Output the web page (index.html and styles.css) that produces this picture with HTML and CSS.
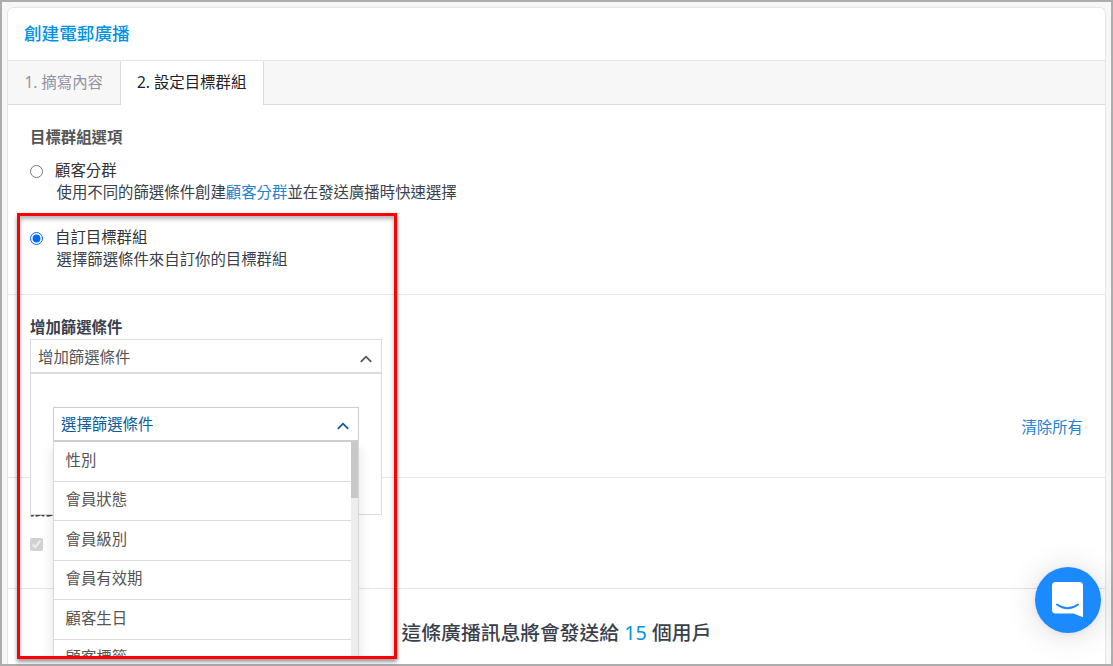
FILE: index.html
```html
<!DOCTYPE html>
<html lang="zh-Hant">
<head>
    <meta charset="UTF-8">
    <meta name="viewport" content="width=device-width, initial-scale=1.0">
    <title>創建電郵廣播</title>
    <link rel="stylesheet" href="styles.css">
</head>
<body>
    <div class="card">
        <h1 class="card-title">創建電郵廣播</h1>

        <nav class="tabs">
            <a class="tab">1. 摘寫內容</a>
            <a class="tab active">2. 設定目標群組</a>
        </nav>

        <section class="section target">
            <h2 class="section-title">目標群組選項</h2>
            <label class="option">
                <input type="radio" name="target">
                <span class="option-text">
                    <span class="option-name">顧客分群</span>
                    <span class="option-hint">使用不同的篩選條件創建<a class="link">顧客分群</a>並在發送廣播時快速選擇</span>
                </span>
            </label>
            <label class="option">
                <input type="radio" name="target" checked>
                <span class="option-text">
                    <span class="option-name">自訂目標群組</span>
                    <span class="option-hint">選擇篩選條件來自訂你的目標群組</span>
                </span>
            </label>
        </section>

        <section class="section filters">
            <h2 class="section-title dark">增加篩選條件</h2>
            <div class="select">
                <div class="select-head">
                    <span>增加篩選條件</span>
                    <svg class="chevron" width="12" height="8" viewBox="0 0 12 8"><path d="M.8 6.9 6 1.7l5.2 5.2"/></svg>
                </div>
                <!-- panel abierto del filtro -->
                <div class="select-panel">
                    <div class="select-head inner">
                        <span>選擇篩選條件</span>
                        <svg class="chevron" width="12" height="8" viewBox="0 0 12 8"><path d="M.8 6.9 6 1.7l5.2 5.2"/></svg>
                    </div>
                    <div class="menu">
                        <ul class="menu-list">
                            <li>性別</li>
                            <li>會員狀態</li>
                            <li>會員級別</li>
                            <li>會員有效期</li>
                            <li>顧客生日</li>
                            <li>顧客標籤</li>
                        </ul>
                        <div class="scrollbar"><div class="thumb"></div></div>
                    </div>
                </div>
            </div>
            <div class="actions">
                <a class="link">清除所有</a>
            </div>
        </section>

        <section class="section consent">
            <h2 class="section-title dark">接受</h2>
            <input type="checkbox" checked disabled>
        </section>

        <footer class="summary">這條廣播訊息將會發送給 <span class="count">15</span> 個用戶</footer>
    </div>

    <div class="highlight"></div>

    <button class="messenger" aria-label="chat">
        <svg width="32" height="36" viewBox="0 0 32 36">
            <path fill="#fff" d="M3.500 0h24A3.500 3.500 0 0 1 31 3.500V35.300L21.500 31.500H3.500A3.500 3.500 0 0 1 0 28V3.500A3.500 3.500 0 0 1 3.500 0z"/>
            <path fill="none" stroke="#1b8aff" stroke-width="2" stroke-linecap="round" d="M5 22.500q10.500 7.600 21 0"/>
        </svg>
    </button>
</body>
</html>
```

FILE: styles.css
```css
* {
    box-sizing: border-box;
}
body {
    margin: 0;
    height: 666px;
    padding: 5px 5px 0;
    border: 2px solid #adadad;
    background-color: #f7f7f7;
    color: #3a3f4d;
    font-family: "Noto Sans", "Noto Sans CJK TC", sans-serif;
    font-size: 15.4px;
    line-height: 22px;
    overflow: hidden;
}
.card {
    height: 657px;
    background-color: #fff;
    border: 1px solid #e5e5e5;
    border-bottom: none;
    border-radius: 6px 6px 0 0;
}
.card-title {
    margin: 0;
    height: 53px;
    padding-left: 16px;
    border-bottom: 1px solid #e5e5e5;
    color: #0092e5;
    font-size: 17.6px;
    font-weight: 500;
    line-height: 51px;
}
.tabs {
    display: flex;
    height: 44px;
    background-color: #f7f7f7;
    border-bottom: 1px solid #dcdcdc;
    line-height: 44px;
}
.tab {
    height: 44px;
    padding: 0 16.500px;
    border-right: 1px solid #dcdcdc;
    color: #8f93a5;
}
.tab.active {
    background-color: #fff;
    color: #1d212b;
}
.section {
    padding: 0 22px;
    border-bottom: 1px solid #e5e5e5;
}
.section-title {
    margin: 0;
    color: #555;
    font-size: 15.4px;
    font-weight: 700;
    line-height: 22px;
}
.section-title.dark {
    color: #3a3f4d;
}
.target {
    height: 190px;
    padding-top: 22px;
}
.option {
    display: flex;
    height: 45px;
    margin-top: 11px;
}
.option + .option {
    margin-top: 22px;
}
.option input {
    width: 13px;
    height: 13px;
    margin: 5px 12px 0 0;
    accent-color: #0068ff;
}
.option-text {
    display: flex;
    flex-direction: column;
}
.option-name {
    color: #333;
}
.option-hint {
    padding-left: 1.500px;
}
.link {
    color: #2383d0;
}
.filters {
    height: 183px;
    padding-top: 22px;
}
.select {
    position: relative;
    z-index: 1;
    width: 352px;
}
.select-head {
    display: flex;
    align-items: center;
    justify-content: space-between;
    height: 35px;
    padding: 3px 9px 0 7px;
    border: 1px solid #dcdcdc;
    border-bottom-width: 2px;
    background-color: #fff;
    color: #555;
}
.select-head.inner {
    padding-top: 2px;
    border-color: #cdcdcd;
    color: #0b5c9e;
}
.chevron {
    margin-top: 2px;
    fill: none;
    stroke: currentColor;
    stroke-width: 1.8;
}
.select-panel {
    position: absolute;
    top: 35px;
    left: 0;
    width: 352px;
    height: 141px;
    padding: 33px 22px 0;
    border: 1px solid #dcdcdc;
    border-top: none;
    background-color: #fff;
}
.menu {
    display: flex;
    height: 215px;
    border: 1px solid #d8d8d8;
    border-width: 0 1px;
    background-color: #fff;
    box-shadow: 0 6px 12px rgba(0,0,0,0.12);
    clip-path: inset(0 -30px 0 -30px);
    overflow: hidden;
}
.menu-list {
    flex: 1;
    margin: 0;
    padding: 0;
    list-style: none;
    color: #555;
}
.menu-list li {
    height: 39.500px;
    padding: 7.500px 11.500px 0;
    border-bottom: 1px solid #dcdcdc;
}
.scrollbar {
    width: 7px;
    background-color: #ededed;
}
.thumb {
    height: 56px;
    background-color: #c8c8c8;
}
.actions {
    margin-top: 43px;
    text-align: right;
}
.consent {
    height: 111px;
    padding-top: 21px;
}
.consent input {
    display: block;
    width: 13px;
    height: 13px;
    margin: 17px 0 0;
}
.summary {
    padding-top: 30px;
    text-align: center;
    font-size: 19.8px;
    font-weight: 500;
    line-height: 28px;
}
.count {
    color: #0092e5;
    font-weight: 400;
}
/* marco rojo de la zona destacada */
.highlight {
    position: absolute;
    z-index: 2;
    top: 213px;
    left: 17px;
    width: 380px;
    height: 446px;
    border: 3px solid #f00;
    box-shadow: 0 3px 4px rgba(0,0,0,0.4), inset 0 3px 4px rgba(0,0,0,0.3);
    pointer-events: none;
}
.messenger {
    position: absolute;
    z-index: 3;
    top: 567px;
    left: 1035px;
    display: flex;
    justify-content: center;
    width: 66px;
    height: 66px;
    padding: 15px 1px 0 0;
    border: none;
    border-radius: 50%;
    background-color: #1b8aff;
    box-shadow: 0 1px 6px rgba(0,0,0,0.06), 0 2px 32px rgba(0,0,0,0.14);
}
.messenger svg {
    display: block;
}
```
